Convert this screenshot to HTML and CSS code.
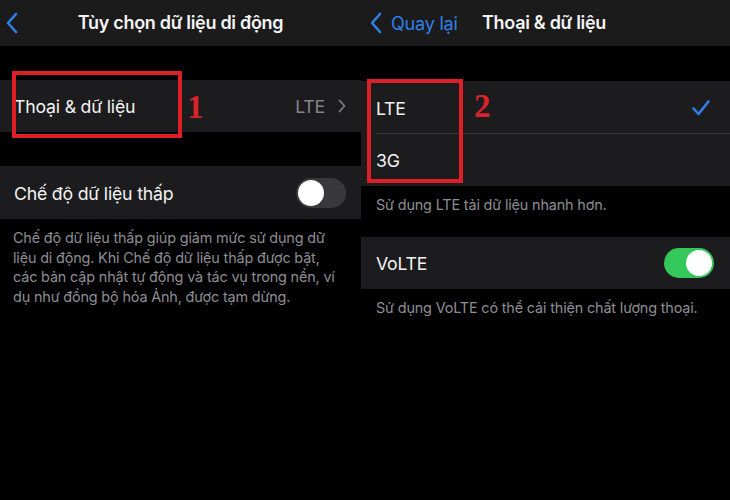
FILE: index.html
```html
<!DOCTYPE html>
<html lang="vi">
<head>
<meta charset="utf-8">
<title>Thoại &amp; dữ liệu</title>
<link rel="stylesheet" href="styles.css">
</head>
<body>
<div class="screens">
  <section class="screen screen-left">
    <header class="nav">
      <span class="nav-back">
        <svg class="chev-back" width="12" height="22" viewBox="0 0 12 22"><path d="M10 2 L2 11 L10 20" fill="none" stroke="#2f80e8" stroke-width="2.6" stroke-linecap="round" stroke-linejoin="round"/></svg>
      </span>
      <h1 class="nav-title">Tùy chọn dữ liệu di động</h1>
    </header>

    <div class="group group-first">
      <div class="cell">
        <span class="cell-label">Thoại &amp; dữ liệu</span>
        <span class="cell-value">LTE</span>
        <svg class="chev-right" width="8" height="14" viewBox="0 0 8 14"><path d="M1.5 1.5 L6.5 7 L1.5 12.5" fill="none" stroke="#7d7d83" stroke-width="1.8" stroke-linecap="round" stroke-linejoin="round"/></svg>
      </div>
      <span class="mark mark-1"></span>
      <span class="mark-num num-1">1</span>
    </div>

    <div class="group group-second">
      <div class="cell">
        <span class="cell-label">Chế độ dữ liệu thấp</span>
        <span class="switch"><span class="knob"></span></span>
      </div>
    </div>
    <p class="footnote footnote-long">Chế độ dữ liệu thấp giúp giảm mức sử dụng dữ<br>liệu di động. Khi Chế độ dữ liệu thấp được bật,<br>các bản cập nhật tự động và tác vụ trong nền, ví<br>dụ như đồng bộ hóa Ảnh, được tạm dừng.</p>
  </section>

  <section class="screen screen-right">
    <header class="nav nav-right">
      <span class="nav-back nav-back-text">
        <svg class="chev-back" width="12" height="22" viewBox="0 0 12 22"><path d="M10 2 L2 11 L10 20" fill="none" stroke="#2f80e8" stroke-width="2.6" stroke-linecap="round" stroke-linejoin="round"/></svg>
        <span class="back-label">Quay lại</span>
      </span>
      <h1 class="nav-title nav-title-right">Thoại &amp; dữ liệu</h1>
    </header>

    <div class="group group-first-right">
      <div class="cell cell-split">
        <span class="cell-label">LTE</span>
        <svg class="check" width="20" height="18" viewBox="0 0 20 18"><path d="M2.5 9.5 L7.5 15 L17.5 2.5" fill="none" stroke="#2f80e8" stroke-width="2.6" stroke-linecap="round" stroke-linejoin="round"/></svg>
      </div>
      <div class="cell">
        <span class="cell-label">3G</span>
      </div>
      <span class="mark mark-2"></span>
      <span class="mark-num num-2">2</span>
    </div>
    <p class="footnote footnote-short">Sử dụng LTE tải dữ liệu nhanh hơn.</p>

    <div class="group">
      <div class="cell cell-switch">
        <span class="cell-label">VoLTE</span>
        <span class="switch switch-on"><span class="knob"></span></span>
      </div>
    </div>
    <p class="footnote footnote-short">Sử dụng VoLTE có thể cải thiện chất lượng thoại.</p>
  </section>
</div>
</body>
</html>
```

FILE: styles.css
```css
* { box-sizing: border-box; margin: 0; padding: 0; }

html, body {
  width: 730px;
  height: 500px;
  background: #000;
  overflow: hidden;
}

body {
  font-family: Inter, "Noto Sans", sans-serif;
  color: #f2f2f2;
  -webkit-font-smoothing: antialiased;
}

.screens {
  display: flex;
  height: 500px;
}

.screen {
  display: flex;
  flex-direction: column;
  position: relative;
}

.screen-left { width: 361px; }
.screen-right { width: 369px; }

/* navigation bar */
.nav {
  height: 46px;
  background: #1b1b1c;
  display: flex;
  align-items: center;
  position: relative;
}

.nav-back {
  display: flex;
  align-items: center;
  padding-left: 6px;
  height: 100%;
}

.chev-back { display: block; }

.nav-title {
  position: absolute;
  left: 0;
  right: 0;
  top: 12px;
  text-align: center;
  font-size: 18px;
  font-weight: 600;
  letter-spacing: -0.3px;
  color: #f4f4f4;
}

.nav-right .nav-back { padding-left: 9px; }

.back-label {
  color: #2f80e8;
  font-size: 18px;
  margin-left: 9px;
  letter-spacing: -0.2px;
}

.nav-title-right {
  left: 121px;
  right: auto;
  text-align: left;
}

/* grouped table */
.group {
  background: #1c1c1e;
  position: relative;
}

.group-first { margin-top: 34px; }
.group-second { margin-top: 34px; }
.group-first-right { margin-top: 35px; }

.cell {
  height: 52px;
  display: flex;
  align-items: center;
  padding: 0 15px 0 14px;
  font-size: 17.7px;
  letter-spacing: -0.2px;
}

.screen-right .cell { padding-left: 15px; padding-right: 19px; }
.screen-right .cell-switch { padding-right: 16px; }

.group-second .cell { height: 53px; }

.cell-label { flex: 1; color: #f2f2f2; padding-top: 1px; }

.cell-value {
  color: #85858b;
  margin-right: 13px;
}

.chev-right { display: block; }

.cell-split {
  position: relative;
  height: 53px;
}

.cell-split::after {
  content: "";
  position: absolute;
  left: 15px;
  right: 0;
  bottom: 0;
  height: 1px;
  background: #38383a;
}

.check { display: block; }

/* switches */
.switch {
  width: 50px;
  height: 30px;
  border-radius: 15px;
  background: #39393d;
  position: relative;
}

.switch .knob {
  position: absolute;
  top: 2px;
  left: 2px;
  width: 26px;
  height: 26px;
  border-radius: 50%;
  background: #fff;
}

.switch-on { background: #34c759; }
.switch-on .knob { left: auto; right: 2px; }

/* section footers */
.footnote {
  color: #8e8e93;
  font-size: 14.4px;
  letter-spacing: -0.15px;
}

.footnote-long {
  padding: 9px 0 0 13px;
  line-height: 19.5px;
  white-space: nowrap;
}

.footnote-short {
  padding: 9px 15px 0 15px;
  height: 51px;
  line-height: 19px;
}

/* red annotation frames drawn over the rows */
.mark {
  position: absolute;
  border: 4px solid #dd2027;
}

.mark-1 {
  left: 12px;
  top: -9px;
  width: 170px;
  height: 67px;
}

.mark-2 {
  left: 6px;
  top: -2px;
  width: 96px;
  height: 104px;
}

.mark-num {
  position: absolute;
  font-family: "Liberation Serif", serif;
  font-weight: 700;
  color: #d8232a;
  font-size: 33px;
  line-height: 1;
}

.num-1 { left: 187px; top: 11px; }
.num-2 { left: 113px; top: 9px; }
```
